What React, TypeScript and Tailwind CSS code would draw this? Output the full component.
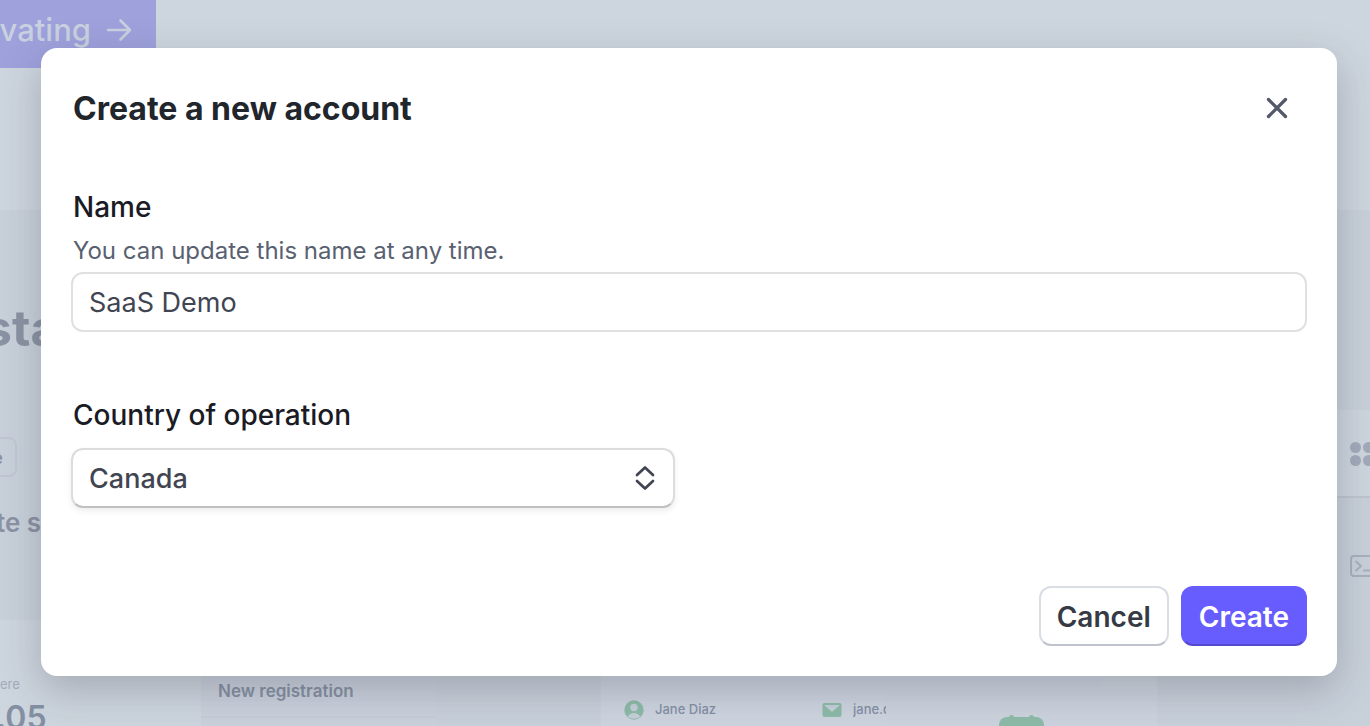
import React, { FormEvent, useState } from 'react';

const countries = ['Canada', 'France', 'Germany', 'United Kingdom', 'United States'];

const Backdrop: React.FC = () => {
  return (
    <div className="flex h-screen min-h-full flex-col overflow-hidden bg-[#cdd5de]" inert>
      <div className="flex h-[210px] shrink-0 items-start">
        <a
          href="#activate"
          className="-mt-2 flex h-[76px] w-[156px] items-center justify-end gap-4 rounded-r-lg bg-[#9ea1dc] pr-[25px] text-[31px] font-medium text-[#c9d0df]"
        >
          <span>vating</span>
          <svg className="h-6 w-6 shrink-0" viewBox="0 0 24 24" fill="none" stroke="currentColor" strokeWidth="2.6">
            <path d="M1 12H23M13.5 2.5L23 12L13.5 21.5" strokeLinecap="round" strokeLinejoin="round" />
          </svg>
        </a>
      </div>

      <div className="flex h-[410px] shrink-0 justify-between bg-[#c8d0da]">
        <div className="flex flex-col items-start pt-[88px] text-[#8a93a3]">
          <p className="-ml-4 text-[50px] leading-[60px] font-bold">sta</p>
          <div className="mt-[79px] flex h-10 w-[17px] items-center justify-end rounded-r-lg border-2 border-l-0 border-[#c0c7d4] pt-0.5 pr-3">
            <span className="text-lg font-semibold">e</span>
          </div>
          <p className="mt-7 -ml-1 text-[26px] leading-9 font-semibold">te s</p>
        </div>
        <div className="w-[38px] pt-[200px]">
          <div className="h-[88px] overflow-hidden border-b-2 border-[#bec5cf] bg-[#cdd5de] pt-[31px] pl-[18px]">
            <svg className="h-[26px] w-[26px]" viewBox="0 0 26 26" fill="#a2abba">
              <circle cx="5.5" cy="6.5" r="5.5" />
              <circle cx="18.5" cy="6.5" r="5.5" />
              <circle cx="5.5" cy="19.5" r="5.5" />
              <circle cx="18.5" cy="19.5" r="5.5" />
            </svg>
          </div>
          <div className="overflow-hidden pt-[57px] pl-[18px]">
            <svg className="h-[22px] w-[28px]" viewBox="0 0 28 22" fill="none" stroke="#a8b0be" strokeWidth="2">
              <rect x="1" y="1" width="26" height="20" rx="3" />
              <path d="M5.5 6L11 11L5.5 16M13 15.5H21" />
            </svg>
          </div>
        </div>
      </div>

      <div className="flex h-[106px] shrink-0">
        <div className="w-[201px] pt-[54px]">
          <p className="text-[13px] leading-5 text-[#a3acbb]">ere</p>
          <p className="-ml-1 pt-1 text-[32px] leading-10 font-semibold text-[#8490a2]">.05</p>
        </div>
        <div className="w-[235px] bg-[#cad1dc] pt-[58px]">
          <p className="border-b-2 border-[#c5ccd9] pb-3 pl-[17px] text-[17px] leading-[26px] font-semibold text-[#8590a2]">
            New registration
          </p>
        </div>
        <div className="w-[165px] bg-[#c8d0da]" />
        <div className="flex w-[498px] items-center gap-[11px] bg-[#cdd4df] pt-[74px] pl-[23px] text-[13px] font-medium text-[#8490a5]">
          <svg className="h-5 w-5 shrink-0" viewBox="0 0 20 20">
            <circle cx="10" cy="10" r="9.7" fill="#8dbaa8" />
            <circle cx="10" cy="7.5" r="3.7" fill="#c6cfda" />
            <path d="M4 16.5C5.5 11.8 14.5 11.8 16 16.5C12.5 19.5 7.5 19.5 4 16.5Z" fill="#c6cfda" />
          </svg>
          <p className="w-[156px]">Jane Diaz</p>
          <svg className="h-5 w-5 shrink-0" viewBox="0 0 20 20">
            <rect x="0.5" y="3" width="19" height="14" rx="2" fill="#8dbaa8" />
            <path d="M2 5L10 12L18 5Z" fill="#c6cfda" />
          </svg>
          <p className="w-[34px] overflow-hidden">jane.d</p>
        </div>
        <div className="-ml-[213px] w-[271px] pt-[70px]">
          <div className="h-9 overflow-hidden rounded-tr-lg bg-[#ccd3de] pt-6 pl-[113px]">
            <svg className="h-12 w-[46px]" viewBox="0 0 46 48" fill="#8dbaa8">
              <rect x="0" y="3" width="45" height="45" rx="8" />
              <rect x="10" y="1" width="5" height="8" rx="2.5" />
              <rect x="30" y="1" width="5" height="8" rx="2.5" />
            </svg>
          </div>
        </div>
        <div className="flex-1 bg-[#c8d0da]" />
      </div>
    </div>
  );
};

const App: React.FC = () => {
  const [name, setName] = useState('SaaS Demo');
  const [country, setCountry] = useState('Canada');

  const createAccount = (event: FormEvent<HTMLFormElement>) => {
    event.preventDefault();
  };

  return (
    <div className="relative overflow-hidden font-['Inter',sans-serif]">
      <Backdrop />
      <div className="absolute inset-0 flex items-start pt-12 pr-[33px] pl-[41px]">
        <div
          role="dialog"
          aria-labelledby="dialog-title"
          className="w-full rounded-2xl bg-white px-[30px] pt-10 pb-[30px] shadow-[0_14px_40px_rgba(48,52,61,0.26)]"
        >
          <div className="flex items-start justify-between pr-[18px] pl-0.5">
            <h1 id="dialog-title" className="text-[32px] leading-[42px] font-bold text-[#21252c]">
              Create a new account
            </h1>
            <button type="button" aria-label="Close" className="pt-2 text-[#545969]">
              <svg className="h-6 w-6" viewBox="0 0 24 24" fill="none" stroke="currentColor" strokeWidth="3.3">
                <path d="M3.5 3.5L20.5 20.5M20.5 3.5L3.5 20.5" strokeLinecap="round" />
              </svg>
            </button>
          </div>

          <form onSubmit={createAccount}>
            <div className="flex flex-col pt-[59px]">
              <label htmlFor="name" className="pl-0.5 text-[28px] leading-9 font-[450] text-[#1a1b25]">
                Name
              </label>
              <p id="name-hint" className="pt-2 pl-0.5 text-2xl leading-9 text-[#596171]">
                You can update this name at any time.
              </p>
              <input
                type="text"
                id="name"
                name="name"
                aria-describedby="name-hint"
                value={name}
                onChange={(event) => setName(event.target.value)}
                className="mt-[3px] h-[60px] w-full rounded-xl border-2 border-[#e0e0e0] bg-white px-4 text-[27px] text-[#414552]"
              />
            </div>

            <div className="flex flex-col pt-[65px]">
              <label htmlFor="country" className="pl-0.5 text-[28px] leading-9 font-[450] text-[#1a1b25]">
                Country of operation
              </label>
              <div className="relative mt-[15px] w-[604px] max-w-full">
                <select
                  id="country"
                  name="country"
                  value={country}
                  onChange={(event) => setCountry(event.target.value)}
                  className="h-[60px] w-full appearance-none rounded-xl border-2 border-[#dcdcdc] border-b-[#c0c0c2] bg-white px-4 pt-0.5 text-[27px] font-medium text-[#414552] shadow-[0_3px_6px_rgba(0,0,0,0.07)]"
                >
                  {countries.map((item) => (
                    <option key={item}>{item}</option>
                  ))}
                </select>
                <svg
                  className="pointer-events-none absolute top-[17px] right-[18px] h-[26px] w-6 text-[#414552]"
                  viewBox="0 0 24 26"
                  fill="none"
                  stroke="currentColor"
                  strokeWidth="2.7"
                >
                  <path d="M4 10L12 2.5L20 10M4 16L12 23.5L20 16" strokeLinecap="round" strokeLinejoin="round" />
                </svg>
              </div>
            </div>

            <div className="flex justify-end gap-3 pt-[78px]">
              <button
                type="button"
                className="h-[60px] rounded-xl border-2 border-[#d8dee4] border-b-[#bfc4cc] bg-white px-4 pt-0.5 text-[28px] font-semibold text-[#353a44]"
              >
                Cancel
              </button>
              <button
                type="submit"
                className="h-[60px] rounded-xl border-2 border-[#675dff] border-b-[#5449cf] bg-[#675dff] px-4 pt-0.5 text-[28px] font-semibold text-white"
              >
                Create
              </button>
            </div>
          </form>
        </div>
      </div>
    </div>
  );
};

export default App;
